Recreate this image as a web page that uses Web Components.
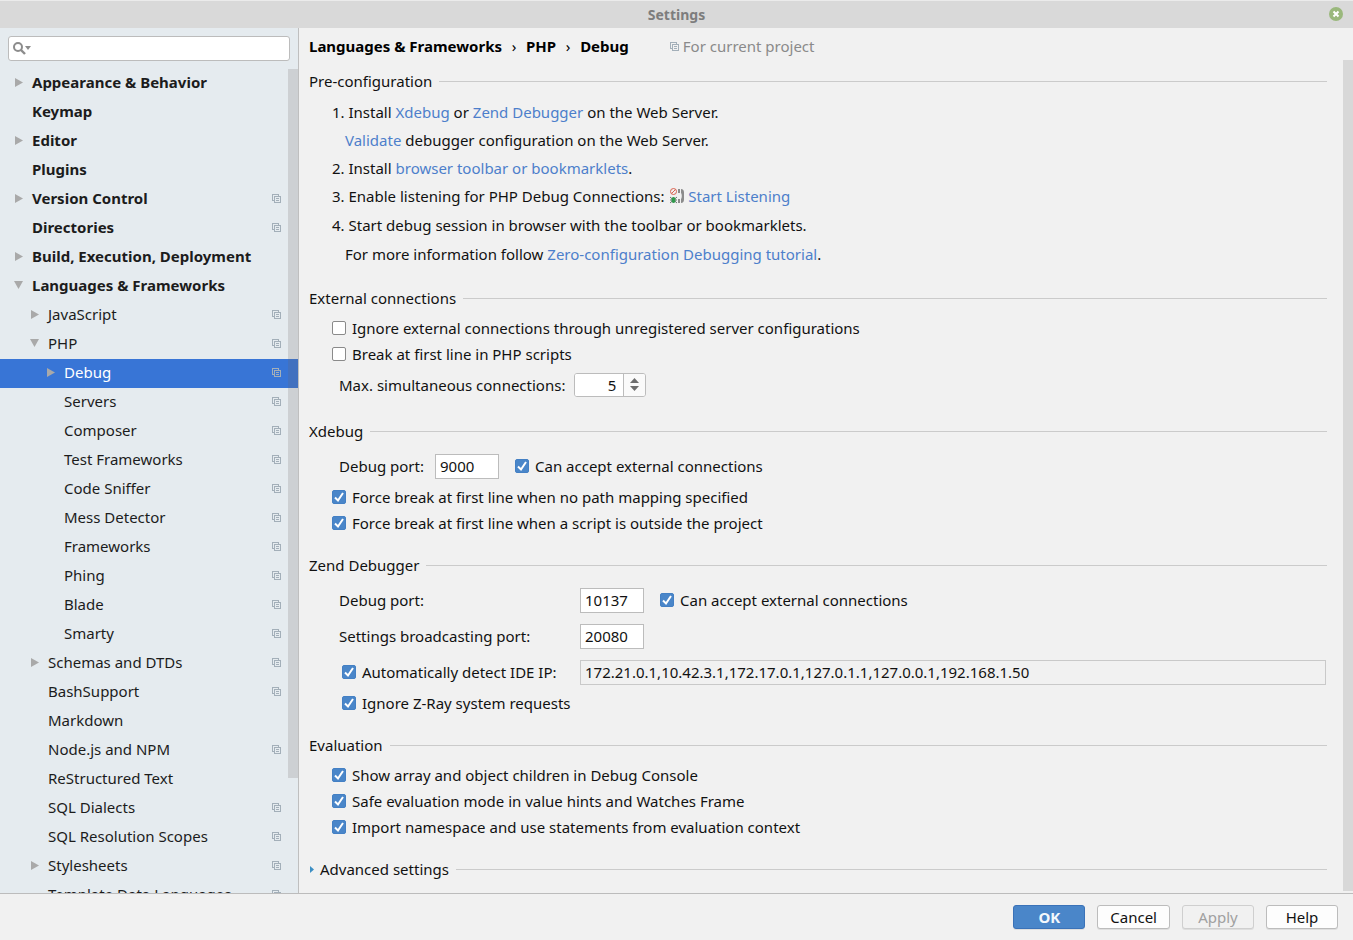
<!DOCTYPE html>
<html lang="en">
<head>
<meta charset="utf-8">
<meta name="viewport" content="width=device-width, initial-scale=1">
<title>Settings</title>
<style>
html, body {
  height: 100%;
}
body {
  margin: 0;
  font: 15px/20px "Noto Sans", sans-serif;
  color: #111;
  --link: #4d7fcb;
  --blue: #4a86c9;
  --border: #bcbcbc;
  --line: #cbcbcb;
}
</style>
</head>
<body>
<settings-dialog>
  <title-bar slot="title">Settings</title-bar>

  <search-box slot="side"></search-box>
  <settings-tree slot="side"></settings-tree>

  <bread-crumbs slot="head" path="Languages &amp; Frameworks/PHP/Debug">For current project</bread-crumbs>

  <settings-section heading="Pre-configuration">
    <setup-steps></setup-steps>
  </settings-section>

  <settings-section heading="External connections">
    <check-option>Ignore external connections through unregistered server configurations</check-option>
    <check-option>Break at first line in PHP scripts</check-option>
    <number-spinner value="5">Max. simultaneous connections:</number-spinner>
  </settings-section>

  <settings-section heading="Xdebug">
    <form-row inset>
      <port-field value="9000" label="Debug port:"></port-field>
      <check-option checked>Can accept external connections</check-option>
    </form-row>
    <check-option checked>Force break at first line when no path mapping specified</check-option>
    <check-option checked>Force break at first line when a script is outside the project</check-option>
  </settings-section>

  <settings-section heading="Zend Debugger">
    <form-row inset>
      <port-field value="10137" label="Debug port:" wide></port-field>
      <check-option checked>Can accept external connections</check-option>
    </form-row>
    <form-row inset>
      <port-field value="20080" label="Settings broadcasting port:" wide></port-field>
    </form-row>
    <ip-row value="172.21.0.1,10.42.3.1,172.17.0.1,127.0.1.1,127.0.0.1,192.168.1.50">Automatically detect IDE IP:</ip-row>
    <check-option checked indent>Ignore Z-Ray system requests</check-option>
  </settings-section>

  <settings-section heading="Evaluation">
    <check-option checked>Show array and object children in Debug Console</check-option>
    <check-option checked>Safe evaluation mode in value hints and Watches Frame</check-option>
    <check-option checked>Import namespace and use statements from evaluation context</check-option>
  </settings-section>

  <settings-section heading="Advanced settings" collapsed></settings-section>

  <dialog-button slot="actions" kind="primary">OK</dialog-button>
  <dialog-button slot="actions">Cancel</dialog-button>
  <dialog-button slot="actions" disabled>Apply</dialog-button>
  <dialog-button slot="actions">Help</dialog-button>
</settings-dialog>

<script>
/**
 * Attaches an open shadow root with the given markup.
 */
function render(host, html) {
  const template = document.createElement('template')
  template.innerHTML = html
  host.attachShadow({ mode: 'open' })
    .appendChild(template.content.cloneNode(true))
}

// Two overlapping sheets, marks settings stored per project.
const projectIcon = `
<svg width="9" height="9" viewBox="0 0 9 9" fill="none" stroke="#a3afb9" shape-rendering="crispEdges" aria-hidden="true">
  <path d="M2 6.5H.5V.5h6V2M2.5 2.5h6v6h-6zM4 4.5h3M4 6.5h3"/>
</svg>`

/**
 * The window frame: title, side panel, content and action bar.
 */
customElements.define('settings-dialog',
  class extends HTMLElement {
    constructor() {
      super()
      render(this, `
<style>
:host {
  display: grid;
  grid-template-rows: auto minmax(0, 1fr) auto;
  height: 100vh;
  background: #f1f1f1;
}
.middle {
  display: grid;
  grid-template-columns: 299px minmax(0, 1fr);
  min-height: 0;
}
aside {
  display: flex;
  flex-direction: column;
  min-height: 0;
  background: #e5ebef;
  border-right: 1px solid #bfbfbf;
}
main {
  display: grid;
  grid-template-rows: auto minmax(0, 1fr);
  min-height: 0;
  padding: 8px 0 2px 10px;
}
.scroller {
  display: flex;
  min-height: 0;
  overflow: hidden;
}
.content {
  flex: 1;
  min-width: 0;
  padding: 11px 16px 0 0;
}
.bar {
  width: 10px;
  background: #d8d8d8;
}
footer {
  display: flex;
  justify-content: flex-end;
  gap: 12px;
  padding: 11px 15px;
  border-top: 1px solid #bcbcbc;
}
</style>
<slot name="title"></slot>
<div class="middle">
  <aside><slot name="side"></slot></aside>
  <main>
    <slot name="head"></slot>
    <div class="scroller">
      <div class="content"><slot></slot></div>
      <div class="bar"></div>
    </div>
  </main>
</div>
<footer><slot name="actions"></slot></footer>`)
    }
  }
)

customElements.define('title-bar',
  class extends HTMLElement {
    constructor() {
      super()
      render(this, `
<style>
:host {
  display: grid;
  grid-template-columns: 1fr auto 1fr;
  align-items: center;
  height: 27px;
  border-top: 1px solid #ebebeb;
  background: #d9d9d9;
  color: #7d7d7d;
  font-size: 14px;
  font-weight: bold;
}
button {
  grid-column: 3;
  justify-self: end;
  display: block;
  margin-right: 10px;
  padding: 0 0 2px;
  border: 0;
  background: none;
}
svg {
  display: block;
}
span {
  grid-column: 2;
}
</style>
<span><slot></slot></span>
<button aria-label="Close">
  <svg width="14" height="14" viewBox="0 0 14 14">
    <circle cx="7" cy="7" r="7" fill="#9ab87c"/>
    <path d="M4.5 4.5l5 5M9.5 4.5l-5 5" stroke="#fff" stroke-width="2"/>
  </svg>
</button>`)
    }
  }
)

customElements.define('search-box',
  class extends HTMLElement {
    constructor() {
      super()
      render(this, `
<style>
:host {
  display: block;
  padding: 8px 8px 8px;
}
label {
  display: flex;
  align-items: center;
  height: 23px;
  padding-left: 4px;
  border: 1px solid var(--border);
  border-radius: 3px;
  background: #fff;
}
input {
  flex: 1;
  min-width: 0;
  border: 0;
  outline: 0;
  background: none;
  font: inherit;
}
</style>
<label>
  <svg width="18" height="16" viewBox="0 0 18 16" aria-hidden="true">
    <circle cx="5" cy="6" r="4" fill="none" stroke="#8c8c8c" stroke-width="2"/>
    <path d="M8 9l4 4" stroke="#8c8c8c" stroke-width="2.4"/>
    <path d="M12 5h6l-3 4z" fill="#8c8c8c"/>
  </svg>
  <input type="text" aria-label="Search settings">
</label>`)
    }
  }
)

/**
 * One line of the tree. Attributes: level, arrow (open or closed), project, selected.
 */
customElements.define('tree-item',
  class extends HTMLElement {
    constructor() {
      super()
      render(this, `
<style>
:host {
  display: flex;
  align-items: center;
  box-sizing: border-box;
  height: 29px;
  padding: 0 17px 3px 14px;
  color: #1c1c1c;
  white-space: nowrap;
}
:host([level="0"]) {
  font-weight: bold;
}
:host([level="1"]) {
  padding-left: 30px;
}
:host([level="2"]) {
  padding-left: 46px;
}
:host([selected]) {
  background: #3875d6;
  color: #fff;
}
.arrow {
  flex: none;
  width: 18px;
  height: 10px;
}
.arrow svg, .mark svg {
  display: block;
}
.arrow svg, .mark {
  display: none;
}
:host([arrow="closed"]) .closed,
:host([arrow="open"]) .open,
:host([project]) .mark {
  display: block;
}
.text {
  flex: 1;
}
</style>
<span class="arrow">
  <svg class="closed" width="10" height="10"><path d="M1 1v9l8-4.500z" fill="#a9a9a9"/></svg>
  <svg class="open" width="10" height="10"><path d="M0 1h9l-4.500 8z" fill="#a9a9a9"/></svg>
</span>
<span class="text"><slot></slot></span>
<span class="mark">${projectIcon}</span>`)
    }
  }
)

customElements.define('settings-tree',
  class extends HTMLElement {
    // name, level, arrow, stored per project
    #items = [
      ['Appearance &amp; Behavior', 0, 'closed', false],
      ['Keymap', 0, '', false],
      ['Editor', 0, 'closed', false],
      ['Plugins', 0, '', false],
      ['Version Control', 0, 'closed', true],
      ['Directories', 0, '', true],
      ['Build, Execution, Deployment', 0, 'closed', false],
      ['Languages &amp; Frameworks', 0, 'open', false],
      ['JavaScript', 1, 'closed', true],
      ['PHP', 1, 'open', true],
      ['Debug', 2, 'closed', true],
      ['Servers', 2, '', true],
      ['Composer', 2, '', true],
      ['Test Frameworks', 2, '', true],
      ['Code Sniffer', 2, '', true],
      ['Mess Detector', 2, '', true],
      ['Frameworks', 2, '', true],
      ['Phing', 2, '', true],
      ['Blade', 2, '', true],
      ['Smarty', 2, '', true],
      ['Schemas and DTDs', 1, 'closed', true],
      ['BashSupport', 1, '', true],
      ['Markdown', 1, '', false],
      ['Node.js and NPM', 1, '', true],
      ['ReStructured Text', 1, '', false],
      ['SQL Dialects', 1, '', true],
      ['SQL Resolution Scopes', 1, '', true],
      ['Stylesheets', 1, 'closed', true],
      ['Template Data Languages', 1, '', true]
    ]

    constructor() {
      super()
      const rows = this.#items.map(([name, level, arrow, project]) =>
        `<tree-item level="${level}" arrow="${arrow}"${project ? ' project' : ''}${name === 'Debug' ? ' selected' : ''}>${name}</tree-item>`
      ).join('')
      render(this, `
<style>
:host {
  position: relative;
  display: block;
  flex: 1;
  min-height: 0;
  overflow: hidden;
}
.thumb {
  position: absolute;
  top: 0;
  right: 0;
  width: 10px;
  height: 86%;
  background: rgba(110, 100, 100, 0.2);
}
</style>
${rows}
<div class="thumb"></div>`)
    }
  }
)

customElements.define('bread-crumbs',
  class extends HTMLElement {
    constructor() {
      super()
      const path = this.getAttribute('path').replace('&', '&amp;').split('/')
        .map((part) => `<b>${part}</b>`).join('<i>›</i>')
      render(this, `
<style>
:host {
  display: flex;
  align-items: center;
  height: 20px;
  padding-bottom: 4px;
  color: #000;
}
i {
  width: 24px;
  text-align: center;
  font-style: normal;
}
.note {
  display: flex;
  align-items: center;
  gap: 4px;
  margin-left: 41px;
  color: #8a8a8a;
}
</style>
${path}
<span class="note">${projectIcon}<span><slot></slot></span></span>`)
    }
  }
)

/**
 * A titled group with a rule after its heading.
 */
customElements.define('settings-section',
  class extends HTMLElement {
    constructor() {
      super()
      const arrow = this.hasAttribute('collapsed')
        ? '<svg width="11" height="8" aria-hidden="true"><path d="M1 1v7l4-3.500z" fill="#3d8fc4"/></svg>'
        : ''
      render(this, `
<style>
:host {
  display: block;
  margin-bottom: 19px;
}
header {
  display: flex;
  align-items: center;
}
header::after {
  content: "";
  flex: 1;
  height: 1px;
  margin-left: 7px;
  background: var(--line);
}
.body {
  padding: 7px 0 0 23px;
}
</style>
<header>${arrow}${this.getAttribute('heading')}</header>
<div class="body"><slot></slot></div>`)
    }
  }
)

customElements.define('setup-steps',
  class extends HTMLElement {
    constructor() {
      super()
      render(this, `
<style>
:host {
  display: block;
  padding-bottom: 1px;
}
div {
  line-height: 28px;
}
.tall {
  line-height: 29px;
}
.sub {
  padding-left: 13px;
}
a {
  color: var(--link);
  text-decoration: none;
}
svg {
  margin-left: 2px;
  vertical-align: -2px;
}
</style>
<div>1. Install <a href="#xdebug">Xdebug</a> or <a href="#zend">Zend Debugger</a> on the Web Server.</div>
<div class="sub"><a href="#validate">Validate</a> debugger configuration on the Web Server.</div>
<div>2. Install <a href="#toolbar">browser toolbar or bookmarklets</a>.</div>
<div class="tall">3. Enable listening for PHP Debug Connections:
  <svg width="14" height="16" viewBox="0 0 14 16" aria-hidden="true">
    <circle cx="3.500" cy="3.500" r="3" fill="none" stroke="#d9604f"/>
    <path d="M1.500 5.500l4-4" stroke="#d9604f"/>
    <path d="M0 9l7 6M7 9l-7 6M0 12h7" stroke="#6f6f6f"/>
    <ellipse cx="3.500" cy="12" rx="2" ry="3" fill="#2f9a4c"/>
    <path d="M8 1h2v4H8zM8 11h2v4H8zM11 1c2 0 3 1.500 3 3.500v7c0 2-1 3.500-3 3.500v-4c1-1 1-5 0-6z" fill="#8b8b8b"/>
  </svg>
  <a href="#listen">Start Listening</a></div>
<div class="tall">4. Start debug session in browser with the toolbar or bookmarklets.</div>
<div class="sub">For more information follow <a href="#zeroconf">Zero-configuration Debugging tutorial</a>.</div>`)
    }
  }
)

customElements.define('form-row',
  class extends HTMLElement {
    constructor() {
      super()
      render(this, `
<style>
:host {
  display: flex;
  align-items: center;
  gap: 16px;
  height: 36px;
}
:host([inset]) {
  padding-left: 7px;
}
</style>
<slot></slot>`)
    }
  }
)

customElements.define('check-option',
  class extends HTMLElement {
    constructor() {
      super()
      render(this, `
<style>
:host {
  display: block;
}
:host([indent]) {
  padding-left: 10px;
}
label {
  display: flex;
  align-items: center;
  gap: 6px;
  height: 26px;
  white-space: nowrap;
}
.box {
  display: grid;
}
input, svg {
  grid-area: 1 / 1;
}
input {
  appearance: none;
  box-sizing: border-box;
  width: 14px;
  height: 14px;
  margin: 0;
  border: 1px solid #8a8a8a;
  border-radius: 2px;
  background: #fff;
}
input:checked {
  border-color: #4480c4;
  background: var(--blue);
}
svg {
  display: none;
  pointer-events: none;
}
input:checked + svg {
  display: block;
}
</style>
<label>
  <span class="box">
    <input type="checkbox"${this.hasAttribute('checked') ? ' checked' : ''}>
    <svg width="14" height="14" viewBox="0 0 14 14"><path d="M3 7.500l3 3 5-7.500" fill="none" stroke="#fff" stroke-width="2"/></svg>
  </span>
  <span><slot></slot></span>
</label>`)
    }
  }
)

const fieldStyle = `
input[type="text"] {
  box-sizing: border-box;
  height: 25px;
  padding: 0 4px;
  border: 1px solid var(--border);
  outline: 0;
  background: #fff;
  color: inherit;
  font: inherit;
}`

customElements.define('port-field',
  class extends HTMLElement {
    constructor() {
      super()
      render(this, `
<style>
:host {
  display: block;
}
label {
  display: flex;
  align-items: center;
}
span {
  width: 96px;
}
:host([wide]) span {
  width: 241px;
}
${fieldStyle}
input[type="text"] {
  width: 64px;
}
</style>
<label>
  <span>${this.getAttribute('label')}</span>
  <input type="text" value="${this.getAttribute('value')}">
</label>`)
    }
  }
)

customElements.define('ip-row',
  class extends HTMLElement {
    constructor() {
      super()
      render(this, `
<style>
:host {
  display: flex;
  align-items: center;
  height: 36px;
  padding-right: 1px;
}
check-option {
  flex: none;
  box-sizing: border-box;
  width: 248px;
}
${fieldStyle}
input[type="text"] {
  flex: 1;
  min-width: 0;
  border-color: #c9c9c9;
  background: #f1f1f1;
}
</style>
<check-option checked indent><slot></slot></check-option>
<input type="text" readonly aria-label="IDE IP" value="${this.getAttribute('value')}">`)
    }
  }
)

customElements.define('number-spinner',
  class extends HTMLElement {
    #input

    constructor() {
      super()
      render(this, `
<style>
:host {
  display: flex;
  align-items: center;
  gap: 9px;
  height: 35px;
  padding-left: 7px;
}
.spin {
  display: flex;
  box-sizing: border-box;
  width: 72px;
  height: 24px;
  border: 1px solid var(--border);
  border-radius: 3px;
  background: #fff;
  overflow: hidden;
}
input {
  flex: 1;
  min-width: 0;
  padding: 0 7px 0 0;
  border: 0;
  outline: 0;
  text-align: right;
  color: inherit;
  font: inherit;
}
.arrows {
  display: grid;
  align-content: center;
  gap: 3px;
  width: 21px;
  border-left: 1px solid var(--border);
  background: #fafafa;
}
button {
  display: grid;
  justify-content: center;
  padding: 0;
  border: 0;
  background: none;
}
svg {
  display: block;
}
</style>
<label for="count"><slot></slot></label>
<div class="spin">
  <input id="count" type="text" inputmode="numeric" value="${this.getAttribute('value')}">
  <div class="arrows">
    <button id="up" aria-label="Increase"><svg width="9" height="5"><path d="M0 5h9L4.500 0z" fill="#6e6e6e"/></svg></button>
    <button id="down" aria-label="Decrease"><svg width="9" height="5"><path d="M0 0h9L4.500 5z" fill="#6e6e6e"/></svg></button>
  </div>
</div>`)

      this.#input = this.shadowRoot.querySelector('#count')
      this.shadowRoot.querySelector('#up').addEventListener('click', () => this.#step(1))
      this.shadowRoot.querySelector('#down').addEventListener('click', () => this.#step(-1))
    }

    #step(amount) {
      this.#input.value = Math.max(1, Number(this.#input.value) + amount)
    }
  }
)

customElements.define('dialog-button',
  class extends HTMLElement {
    constructor() {
      super()
      render(this, `
<style>
:host {
  display: block;
}
button {
  box-sizing: border-box;
  display: block;
  min-width: 72px;
  height: 24px;
  padding: 0 12px;
  border: 1px solid var(--border);
  border-radius: 3px;
  box-shadow: 0 1px 0 #dedede;
  background: #fdfdfd;
  color: #111;
  font: inherit;
  line-height: 22px;
}
:host([kind="primary"]) button {
  border-color: #3a72b8;
  background: var(--blue);
  color: #f4f8fc;
  font-weight: bold;
}
button:disabled {
  border-color: #cfcfcf;
  background: #f1f1f1;
  color: #a0a0a0;
}
</style>
<button${this.hasAttribute('disabled') ? ' disabled' : ''}><slot></slot></button>`)
    }
  }
)
</script>
</body>
</html>
